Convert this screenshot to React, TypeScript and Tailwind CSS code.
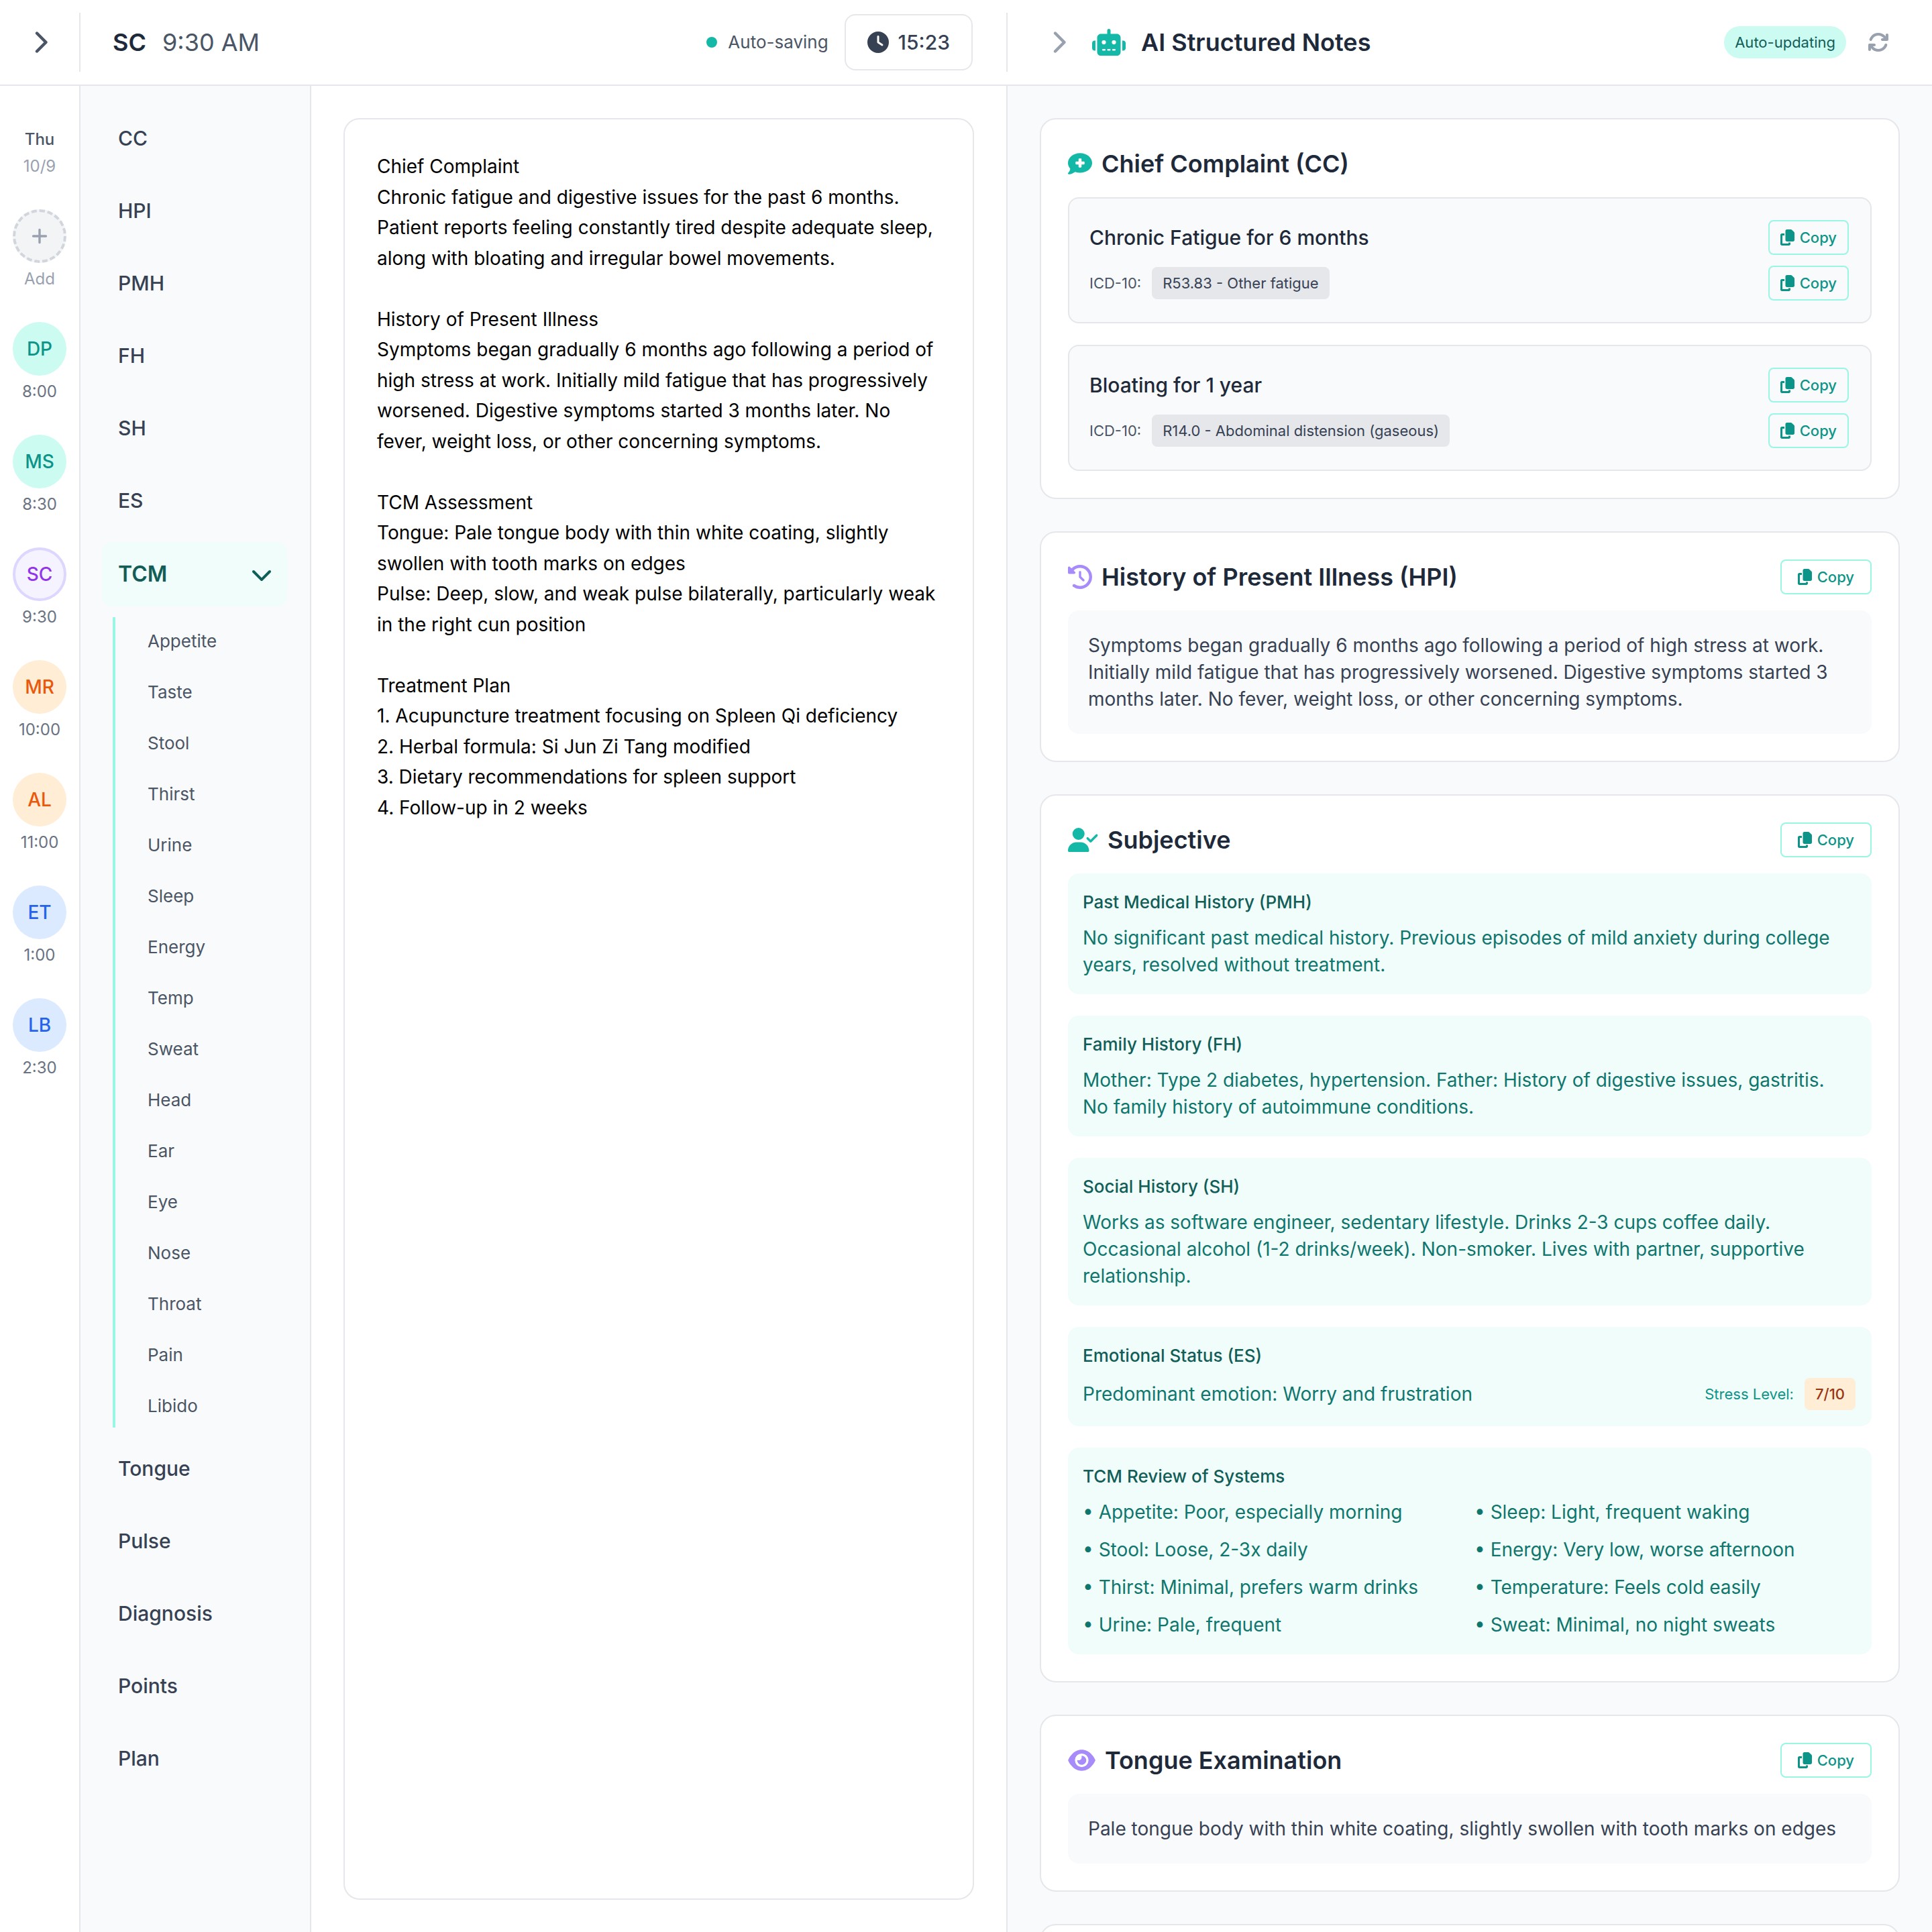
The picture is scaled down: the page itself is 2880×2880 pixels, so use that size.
import {
  FaArrowsRotate,
  FaChevronDown,
  FaChevronRight,
  FaClock,
  FaClockRotateLeft,
  FaCommentMedical,
  FaCopy,
  FaEye,
  FaPlus,
  FaRobot,
  FaUserCheck,
} from 'react-icons/fa6'

const patients = [
  { id: 'DP', time: '8:00', tone: 'bg-[#ccfbf1] text-[#0d9488]' },
  { id: 'MS', time: '8:30', tone: 'bg-[#ccfbf1] text-[#0d9488]' },
  { id: 'SC', time: '9:30', tone: 'border-4 border-[#ddd6fe] bg-[#f5f3ff] text-[#9333ea]' },
  { id: 'MR', time: '10:00', tone: 'bg-[#ffedd5] text-[#ea580c]' },
  { id: 'AL', time: '11:00', tone: 'bg-[#ffedd5] text-[#ea580c]' },
  { id: 'ET', time: '1:00', tone: 'bg-[#dbeafe] text-[#2563eb]' },
  { id: 'LB', time: '2:30', tone: 'bg-[#dbeafe] text-[#2563eb]' },
]

const tcmItems = [
  'Appetite', 'Taste', 'Stool', 'Thirst', 'Urine', 'Sleep', 'Energy', 'Temp',
  'Sweat', 'Head', 'Ear', 'Eye', 'Nose', 'Throat', 'Pain', 'Libido',
]

const note = `Chief Complaint
Chronic fatigue and digestive issues for the past 6 months. Patient reports feeling constantly tired despite adequate sleep, along with bloating and irregular bowel movements.

History of Present Illness
Symptoms began gradually 6 months ago following a period of high stress at work. Initially mild fatigue that has progressively worsened. Digestive symptoms started 3 months later. No fever, weight loss, or other concerning symptoms.

TCM Assessment
Tongue: Pale tongue body with thin white coating, slightly swollen with tooth marks on edges
Pulse: Deep, slow, and weak pulse bilaterally, particularly weak in the right cun position

Treatment Plan
1. Acupuncture treatment focusing on Spleen Qi deficiency
2. Herbal formula: Si Jun Zi Tang modified
3. Dietary recommendations for spleen support
4. Follow-up in 2 weeks`

const tcmReview = [
  'Appetite: Poor, especially morning',
  'Sleep: Light, frequent waking',
  'Stool: Loose, 2-3x daily',
  'Energy: Very low, worse afternoon',
  'Thirst: Minimal, prefers warm drinks',
  'Temperature: Feels cold easily',
  'Urine: Pale, frequent',
  'Sweat: Minimal, no night sweats',
]

function CopyButton({ wide }: { wide?: boolean }) {
  return (
    <button
      className={`flex h-[52px] shrink-0 items-center gap-2 rounded-lg border-2 border-[#99f6e4] text-[22px] font-medium leading-8 text-[#0d9488] ${
        wide ? 'px-6' : 'px-4'
      }`}
    >
      <FaCopy className="h-6 w-[21px]" />
      Copy
    </button>
  )
}

function Complaint({ title, code }: { title: string; code: string }) {
  return (
    <div className="flex flex-col gap-4 rounded-2xl border-2 border-gray-200 bg-gray-50 py-8 pl-[30px] pr-8">
      <div className="flex items-center justify-between">
        <span className="text-[30px] font-medium leading-12 text-gray-800">{title}</span>
        <CopyButton />
      </div>
      <div className="flex items-center justify-between">
        <div className="flex items-center gap-4">
          <span className="text-[22px] leading-8 text-gray-600">ICD-10:</span>
          <span className="rounded-lg bg-gray-200 px-4 py-2 text-[22px] leading-8 text-gray-700">{code}</span>
        </div>
        <CopyButton />
      </div>
    </div>
  )
}

function CardHeading({ icon, title, copy = true }: { icon: React.ReactNode; title: string; copy?: boolean }) {
  return (
    <div className="mb-5 flex h-14 items-start justify-between">
      <div className="flex h-[52px] items-center gap-[14px]">
        {icon}
        <h2 className="text-[36px] font-semibold leading-[52px] text-gray-800">{title}</h2>
      </div>
      {copy && <CopyButton wide />}
    </div>
  )
}

function TealBlock({ title, children }: { title: string; children: React.ReactNode }) {
  return (
    <div className="rounded-2xl bg-[#f0fdfa] py-6 pl-[22px] pr-6">
      <h3 className="mb-[14px] text-[26px] font-medium leading-[38px] text-[#115e59]">{title}</h3>
      {children}
    </div>
  )
}

export default function App() {
  return (
    <div className="flex h-[2880px] w-[2880px] flex-col overflow-hidden bg-white font-['Inter',sans-serif]">
      {/* Top bar */}
      <header className="flex h-32 shrink-0 border-b-2 border-gray-200">
        <div className="flex w-[1500px] shrink-0 items-center">
          <div className="flex h-[88px] w-[120px] shrink-0 items-center justify-center border-r-2 border-gray-200">
            <FaChevronRight className="h-9 w-[23px] text-gray-600" />
          </div>
          <div className="flex flex-1 items-center justify-between pl-12 pr-[50px]">
            <div className="flex items-center gap-6 text-[36px] leading-[56px]">
              <span className="font-semibold text-gray-800">SC</span>
              <span className="text-gray-600">9:30 AM</span>
            </div>
            <div className="flex items-center gap-6">
              <div className="flex items-center gap-4">
                <span className="h-4 w-4 rounded-full bg-[#14b8a6]" />
                <span className="text-[26px] leading-10 text-gray-600">Auto-saving</span>
              </div>
              <div className="flex items-center gap-[14px] rounded-2xl border-2 border-gray-200 px-8 py-4">
                <FaClock className="h-8 w-8 text-gray-700" />
                <span className="text-[30px] font-medium leading-12 text-gray-700">15:23</span>
              </div>
            </div>
          </div>
        </div>
        <div className="flex flex-1 items-center">
          <div className="flex h-[88px] flex-1 items-center justify-between border-l-2 border-gray-200 pl-16 pr-16">
            <div className="flex items-center gap-[39px]">
              <FaChevronRight className="h-9 w-[23px] text-gray-400" />
              <div className="flex items-center gap-[23px]">
                <FaRobot className="h-10 w-[50px] text-[#14b8a6]" />
                <h1 className="text-[36px] font-semibold leading-14 text-gray-800">AI Structured Notes</h1>
              </div>
            </div>
            <div className="flex items-center gap-8">
              <span className="rounded-full bg-[#ccfbf1] px-4 py-2 text-[22px] leading-8 text-[#115e59]">
                Auto-updating
              </span>
              <FaArrowsRotate className="h-8 w-8 text-gray-400" />
            </div>
          </div>
        </div>
      </header>

      <div className="flex min-h-0 flex-1">
        {/* Patient rail */}
        <aside className="flex w-[120px] shrink-0 flex-col items-center gap-12 border-r-2 border-gray-200 bg-white pt-16">
          <div className="flex flex-col items-center gap-2 text-[24px] leading-8">
            <span className="font-medium text-gray-600">Thu</span>
            <span className="text-gray-400">10/9</span>
          </div>
          <div className="flex flex-col items-center gap-2">
            <div className="flex h-20 w-20 items-center justify-center rounded-full border-4 border-dashed border-gray-300 bg-gray-100">
              <FaPlus className="h-7 w-6 text-gray-400" />
            </div>
            <span className="text-[24px] leading-8 text-gray-400">Add</span>
          </div>
          {patients.map((p) => (
            <div key={p.id} className="flex flex-col items-center gap-2">
              <div className={`flex h-20 w-20 items-center justify-center rounded-full text-[28px] font-medium leading-10 ${p.tone}`}>
                {p.id}
              </div>
              <span className="text-[24px] leading-8 text-gray-500">{p.time}</span>
            </div>
          ))}
        </aside>

        {/* Section nav */}
        <nav className="flex w-[344px] shrink-0 flex-col border-r-2 border-gray-200 bg-gray-50 pl-8 pr-[34px] pt-[30px]">
          <div className="flex flex-col gap-3">
            {['CC', 'HPI', 'PMH', 'FH', 'SH', 'ES'].map((s) => (
              <div key={s} className="px-6 py-6 text-[30px] font-medium leading-12 text-gray-700">{s}</div>
            ))}
          </div>
          <div className="mt-[14px] flex h-24 items-center justify-between rounded-2xl bg-[#f0fdfa] px-6 text-[#115e59]">
            <span className="text-[32px] font-semibold leading-12">TCM</span>
            <FaChevronDown className="-mr-0.5 h-8 w-8" />
          </div>
          <div className="ml-4 mt-4 flex flex-col gap-2 border-l-4 border-[#99f6e4] pl-12">
            {tcmItems.map((s) => (
              <div key={s} className="pb-3 pt-4 text-[26px] leading-10 text-gray-600">{s}</div>
            ))}
          </div>
          <div className="mt-[13px] flex flex-col gap-3">
            {['Tongue', 'Pulse', 'Diagnosis', 'Points', 'Plan'].map((s) => (
              <div key={s} className="px-6 py-6 text-[30px] font-medium leading-12 text-gray-700">{s}</div>
            ))}
          </div>
        </nav>

        {/* Free text note */}
        <main className="flex w-[1036px] shrink-0 bg-white p-12">
          <div className="flex-1 whitespace-pre-line rounded-3xl border-2 border-gray-200 p-12 text-[28px] leading-[45.5px] text-black">
            {note}
          </div>
        </main>

        {/* Structured notes */}
        <section className="flex min-w-0 flex-1 flex-col gap-12 overflow-hidden border-l-2 border-gray-200 bg-gray-50 p-12">
          <div className="shrink-0 rounded-3xl border-2 border-gray-200 bg-white p-10">
            <CardHeading copy={false} title="Chief Complaint (CC)" icon={<FaCommentMedical className="h-9 w-9 text-[#14b8a6]" />} />
            <div className="flex flex-col gap-8">
              <Complaint title="Chronic Fatigue for 6 months" code="R53.83 - Other fatigue" />
              <Complaint title="Bloating for 1 year" code="R14.0 - Abdominal distension (gaseous)" />
            </div>
          </div>

          <div className="shrink-0 rounded-3xl border-2 border-gray-200 bg-white p-10">
            <CardHeading title="History of Present Illness (HPI)" icon={<FaClockRotateLeft className="h-9 w-9 text-[#a78bfa]" />} />
            <p className="rounded-2xl bg-gray-50 py-8 pl-[30px] pr-8 text-[28px] leading-10 text-gray-700">
              Symptoms began gradually 6 months ago following a period of high stress at work. Initially mild fatigue
              that has progressively worsened. Digestive symptoms started 3 months later. No fever, weight loss, or
              other concerning symptoms.
            </p>
          </div>

          <div className="shrink-0 rounded-3xl border-2 border-gray-200 bg-white p-10">
            <CardHeading title="Subjective" icon={<FaUserCheck className="h-9 w-[45px] text-[#14b8a6]" />} />
            <div className="flex flex-col gap-8 text-[28px] leading-10 text-[#0f766e]">
              <TealBlock title="Past Medical History (PMH)">
                <p className="pr-1">No significant past medical history. Previous episodes of mild anxiety during college years, resolved without treatment.</p>
              </TealBlock>
              <TealBlock title="Family History (FH)">
                <p className="pr-1">Mother: Type 2 diabetes, hypertension. Father: History of digestive issues, gastritis. No family history of autoimmune conditions.</p>
              </TealBlock>
              <TealBlock title="Social History (SH)">
                <p className="pr-1">Works as software engineer, sedentary lifestyle. Drinks 2-3 cups coffee daily. Occasional alcohol (1-2 drinks/week). Non-smoker. Lives with partner, supportive relationship.</p>
              </TealBlock>
              <TealBlock title="Emotional Status (ES)">
                <div className="flex items-center justify-between">
                  <span>Predominant emotion: Worry and frustration</span>
                  <div className="flex items-center gap-4">
                    <span className="text-[22px] leading-8 text-[#0d9488]">Stress Level:</span>
                    <span className="rounded-lg bg-[#ffedd5] px-4 py-2 text-[22px] font-medium leading-8 text-[#9a3412]">7/10</span>
                  </div>
                </div>
              </TealBlock>
              <TealBlock title="TCM Review of Systems">
                <div className="grid grid-cols-2 gap-4">
                  {tcmReview.map((r) => (
                    <div key={r}>• {r}</div>
                  ))}
                </div>
              </TealBlock>
            </div>
          </div>

          <div className="shrink-0 rounded-3xl border-2 border-gray-200 bg-white p-10">
            <CardHeading title="Tongue Examination" icon={<FaEye className="h-9 w-[41px] text-[#a78bfa]" />} />
            <p className="rounded-2xl bg-gray-50 py-8 pl-[30px] pr-8 text-[28px] leading-10 text-gray-700">
              Pale tongue body with thin white coating, slightly swollen with tooth marks on edges
            </p>
          </div>

          <div className="h-[200px] shrink-0 rounded-3xl border-2 border-gray-200 bg-white" />
        </section>
      </div>
    </div>
  )
}
